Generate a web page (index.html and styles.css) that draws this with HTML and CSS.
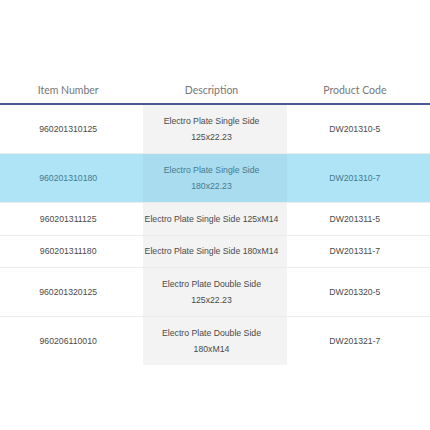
FILE: index.html
```html
<!DOCTYPE html>
<html>
<head>
<meta charset="utf-8">
<link rel="stylesheet" href="styles.css">
</head>
<body>
<div class="wrap">
<table class="products">
  <thead>
    <tr><th>Item Number</th><th>Description</th><th>Product Code</th></tr>
  </thead>
  <tbody>
    <tr><td>960201310125</td><td class="desc">Electro Plate Single Side 125x22.23</td><td>DW201310-5</td></tr>
    <tr class="active"><td>960201310180</td><td class="desc">Electro Plate Single Side 180x22.23</td><td>DW201310-7</td></tr>
    <tr><td>960201311125</td><td class="desc">Electro Plate Single Side 125xM14</td><td>DW201311-5</td></tr>
    <tr><td>960201311180</td><td class="desc">Electro Plate Single Side 180xM14</td><td>DW201311-7</td></tr>
    <tr><td>960201320125</td><td class="desc">Electro Plate Double Side 125x22.23</td><td>DW201320-5</td></tr>
    <tr><td>960206110010</td><td class="desc">Electro Plate Double Side 180xM14</td><td>DW201321-7</td></tr>
  </tbody>
</table>
</div>
</body>
</html>
```
FILE: styles.css
```css
html, body {
  margin: 0;
  padding: 0;
  background: #ffffff;
}
.wrap {
  padding-top: 82px;
}
.products {
  width: 430px;
  border-collapse: collapse;
  table-layout: fixed;
}
.products th {
  font-family: "Lato", "Open Sans", sans-serif;
  font-weight: 400;
  font-size: 10.5px;
  line-height: 17px;
  color: #777777;
  text-align: center;
  padding: 0 7px 4px 0;
  border-bottom: 2px solid #4b5a91;
}
.products td {
  font-family: "Liberation Sans", Arial, sans-serif;
  font-size: 8.7px;
  line-height: 16.5px;
  color: #4a4a4a;
  text-align: center;
  padding: 7.5px 7px 7.5px 0;
}
.products tbody tr + tr td {
  border-top: 1px solid #ebebeb;
}
.products td.desc {
  background: #f3f3f3;
}
.products tr.active td {
  background-color: #aee4f6;
  color: #457a8e;
}
.products tr.active td.desc {
  background-color: #a9dcee;
}
```
